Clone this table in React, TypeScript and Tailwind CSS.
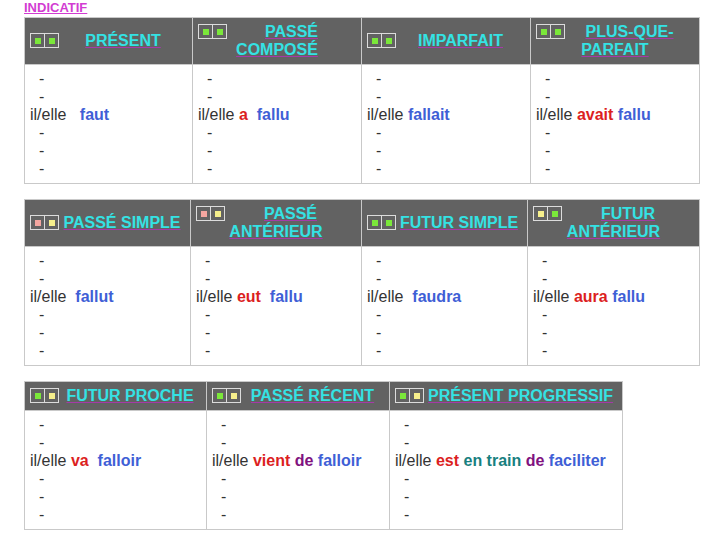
type Seg = { t: string; c?: string };
type Cell = { title: string; icons: [string, string]; line: Seg[] };

const G = "bg-[#7be83a]";
const Y = "bg-[#f6ef8c]";
const P = "bg-[#f4a6a0]";

const BLUE = "text-[#3f5fd6] font-bold";
const RED = "text-[#dc1f1f] font-bold";
const PURPLE = "text-[#80127f] font-bold";
const TEAL = "text-[#17807f] font-bold";

const sp = "\u00a0";

const row1: Cell[] = [
  { title: "PRÉSENT", icons: [G, G], line: [{ t: `il/elle${sp}${sp}${sp}` }, { t: "faut", c: BLUE }] },
  {
    title: "PASSÉ COMPOSÉ",
    icons: [G, G],
    line: [{ t: "il/elle " }, { t: "a", c: RED }, { t: `${sp}${sp}` }, { t: "fallu", c: BLUE }],
  },
  { title: "IMPARFAIT", icons: [G, G], line: [{ t: "il/elle " }, { t: "fallait", c: BLUE }] },
  {
    title: "PLUS-QUE-PARFAIT",
    icons: [G, G],
    line: [{ t: "il/elle " }, { t: "avait", c: RED }, { t: " " }, { t: "fallu", c: BLUE }],
  },
];

const row2: Cell[] = [
  { title: "PASSÉ SIMPLE", icons: [P, Y], line: [{ t: `il/elle${sp}${sp}` }, { t: "fallut", c: BLUE }] },
  {
    title: "PASSÉ ANTÉRIEUR",
    icons: [P, Y],
    line: [{ t: "il/elle " }, { t: "eut", c: RED }, { t: `${sp}${sp}` }, { t: "fallu", c: BLUE }],
  },
  { title: "FUTUR SIMPLE", icons: [G, G], line: [{ t: `il/elle${sp}${sp}` }, { t: "faudra", c: BLUE }] },
  {
    title: "FUTUR ANTÉRIEUR",
    icons: [Y, G],
    line: [{ t: "il/elle " }, { t: "aura", c: RED }, { t: " " }, { t: "fallu", c: BLUE }],
  },
];

const row3: Cell[] = [
  {
    title: "FUTUR PROCHE",
    icons: [G, Y],
    line: [{ t: "il/elle " }, { t: "va", c: RED }, { t: `${sp}${sp}` }, { t: "falloir", c: BLUE }],
  },
  {
    title: "PASSÉ RÉCENT",
    icons: [G, Y],
    line: [
      { t: "il/elle " },
      { t: "vient", c: RED },
      { t: " " },
      { t: "de", c: PURPLE },
      { t: " " },
      { t: "falloir", c: BLUE },
    ],
  },
  {
    title: "PRÉSENT PROGRESSIF",
    icons: [G, Y],
    line: [
      { t: "il/elle " },
      { t: "est", c: RED },
      { t: " " },
      { t: "en train", c: TEAL },
      { t: " " },
      { t: "de", c: PURPLE },
      { t: " " },
      { t: "faciliter", c: BLUE },
    ],
  },
];

function Icon({ colors }: { colors: [string, string] }) {
  return (
    <span className="float-left flex mt-px">
      {colors.map((c, i) => (
        <span
          key={i}
          className={`flex items-center justify-center w-[15px] h-[15px] border border-[#dcdcdc] ${i === 1 ? "-ml-px" : ""}`}
        >
          <span className={`block w-[6px] h-[6px] ${c}`} />
        </span>
      ))}
    </span>
  );
}

const dash = `${sp}${sp}-`;

function Table({ cells, widths }: { cells: Cell[]; widths: number[] }) {
  const total = widths.reduce((a, b) => a + b, 0);
  return (
    <table className="table-fixed border-collapse" style={{ width: total }}>
      <colgroup>
        {widths.map((w, i) => (
          <col key={i} style={{ width: w }} />
        ))}
      </colgroup>
      <thead>
        <tr>
          {cells.map((c) => (
            <th
              key={c.title}
              className="bg-[#626262] border border-[#c9c9c9] px-[5px] py-[5px] align-middle text-center font-bold text-[16px] leading-[18px]"
            >
              <Icon colors={c.icons} />
              <span className="text-[#34e2e4] underline decoration-[#a43aa8]">{c.title}</span>
            </th>
          ))}
        </tr>
      </thead>
      <tbody>
        <tr>
          {cells.map((c) => (
            <td
              key={c.title}
              className="border border-[#c9c9c9] px-[5px] pt-[5px] pb-[5px] align-top text-[16px] leading-[18px] text-[#333333]"
            >
              <div>{dash}</div>
              <div>{dash}</div>
              <div className="whitespace-nowrap">
                {c.line.map((s, i) => (
                  <span key={i} className={s.c}>
                    {s.t}
                  </span>
                ))}
              </div>
              <div>{dash}</div>
              <div>{dash}</div>
              <div>{dash}</div>
            </td>
          ))}
        </tr>
      </tbody>
    </table>
  );
}

export default function App() {
  return (
    <div className="w-[724px] h-[547px] bg-white pl-[24px] font-['Liberation_Sans',Arial,sans-serif]">
      <div className="h-[17px] text-[13px] leading-[15px] font-bold text-[#d23cd2] underline">INDICATIF</div>
      <div className="flex flex-col">
        <Table cells={row1} widths={[168, 169, 169, 169]} />
        <div className="h-[15px]" />
        <Table cells={row2} widths={[166, 171, 166, 172]} />
        <div className="h-[15px]" />
        <Table cells={row3} widths={[182, 183, 233]} />
      </div>
    </div>
  );
}
